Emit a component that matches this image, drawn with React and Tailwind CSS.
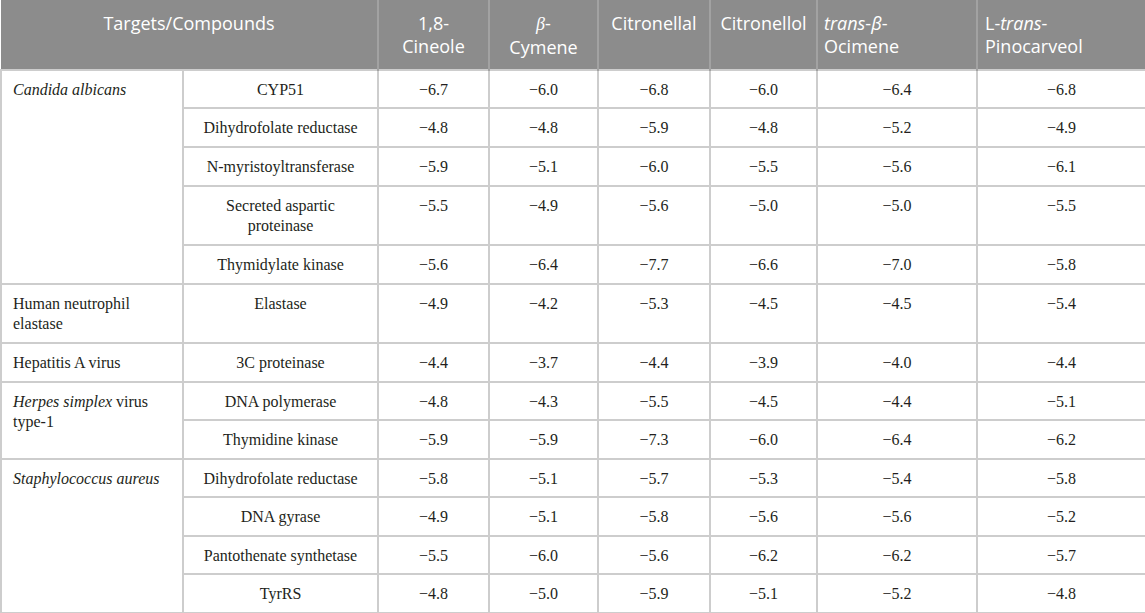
const groups = [
  {
    name: <i>Candida albicans</i>,
    rows: [
      ['CYP51', 38, ['−6.7', '−6.0', '−6.8', '−6.0', '−6.4', '−6.8']],
      ['Dihydrofolate reductase', 39, ['−4.8', '−4.8', '−5.9', '−4.8', '−5.2', '−4.9']],
      ['N-myristoyltransferase', 39, ['−5.9', '−5.1', '−6.0', '−5.5', '−5.6', '−6.1']],
      ['Secreted aspartic proteinase', 59, ['−5.5', '−4.9', '−5.6', '−5.0', '−5.0', '−5.5']],
      ['Thymidylate kinase', 39, ['−5.6', '−6.4', '−7.7', '−6.6', '−7.0', '−5.8']],
    ],
  },
  {
    name: 'Human neutrophil elastase',
    rows: [['Elastase', 59, ['−4.9', '−4.2', '−5.3', '−4.5', '−4.5', '−5.4']]],
  },
  {
    name: 'Hepatitis A virus',
    rows: [['3C proteinase', 39, ['−4.4', '−3.7', '−4.4', '−3.9', '−4.0', '−4.4']]],
  },
  {
    name: (
      <>
        <i>Herpes simplex</i> virus type-1
      </>
    ),
    rows: [
      ['DNA polymerase', 38, ['−4.8', '−4.3', '−5.5', '−4.5', '−4.4', '−5.1']],
      ['Thymidine kinase', 39, ['−5.9', '−5.9', '−7.3', '−6.0', '−6.4', '−6.2']],
    ],
  },
  {
    name: <i>Staphylococcus aureus</i>,
    rows: [
      ['Dihydrofolate reductase', 38, ['−5.8', '−5.1', '−5.7', '−5.3', '−5.4', '−5.8']],
      ['DNA gyrase', 39, ['−4.9', '−5.1', '−5.8', '−5.6', '−5.6', '−5.2']],
      ['Pantothenate synthetase', 38, ['−5.5', '−6.0', '−5.6', '−6.2', '−6.2', '−5.7']],
      ['TyrRS', 39, ['−4.8', '−5.0', '−5.9', '−5.1', '−5.2', '−4.8']],
    ],
  },
];

const rowH = { 38: 'h-[38px]', 39: 'h-[39px]', 59: 'h-[59px]' };

const td = 'border-2 border-[#cdcdcd] align-top pt-[9px] leading-[20px]';

export default function App() {
  return (
    <div className="bg-white w-[1145px] h-[613px] overflow-hidden">
      <table className="w-[1145px] table-fixed border-collapse text-[16px] text-[#231f20] font-['Liberation_Serif',serif]">
        <colgroup>
          <col className="w-[182px]" />
          <col className="w-[195px]" />
          <col className="w-[111px]" />
          <col className="w-[109px]" />
          <col className="w-[112px]" />
          <col className="w-[107px]" />
          <col className="w-[160px]" />
          <col className="w-[169px]" />
        </colgroup>
        <thead>
          <tr className="h-[70px] bg-[#8c8c8c] text-white font-['Open_Sans',sans-serif] text-[18px] leading-[23px]">
            <th colSpan={2} className="font-normal align-top pt-[12px] border-r-2 border-[#a2a2a2]">
              Targets/Compounds
            </th>
            <th className="font-normal align-top pt-[12px] border-x-2 border-[#a2a2a2]">
              1,8-
              <br />
              Cineole
            </th>
            <th className="font-normal align-top pt-[12px] border-x-2 border-[#a2a2a2]">
              <i className="font-['Liberation_Serif',serif]">β</i>-
              <br />
              Cymene
            </th>
            <th className="font-normal align-top pt-[12px] border-x-2 border-[#a2a2a2]">Citronellal</th>
            <th className="font-normal align-top pt-[12px] border-x-2 border-[#a2a2a2]">Citronellol</th>
            <th className="font-normal align-top pt-[12px] pl-[6px] text-left border-x-2 border-[#a2a2a2]">
              <i>trans</i>-<i>β</i>-
              <br />
              Ocimene
            </th>
            <th className="font-normal align-top pt-[12px] pl-[7px] text-left border-l-2 border-[#a2a2a2]">
              L-<i>trans</i>-
              <br />
              Pinocarveol
            </th>
          </tr>
        </thead>
        <tbody>
          {groups.map((g, gi) =>
            g.rows.map(([target, h, vals], ri) => (
              <tr key={`${gi}-${ri}`} className={rowH[h]}>
                {ri === 0 && (
                  <td rowSpan={g.rows.length} className={`${td} pl-[11px] pr-[8px] text-left`}>
                    {g.name}
                  </td>
                )}
                <td className={`${td} px-[10px] text-center`}>{target}</td>
                {vals.map((v, vi) => (
                  <td key={vi} className={`${td} text-center`}>
                    {v}
                  </td>
                ))}
              </tr>
            ))
          )}
        </tbody>
      </table>
    </div>
  );
}
